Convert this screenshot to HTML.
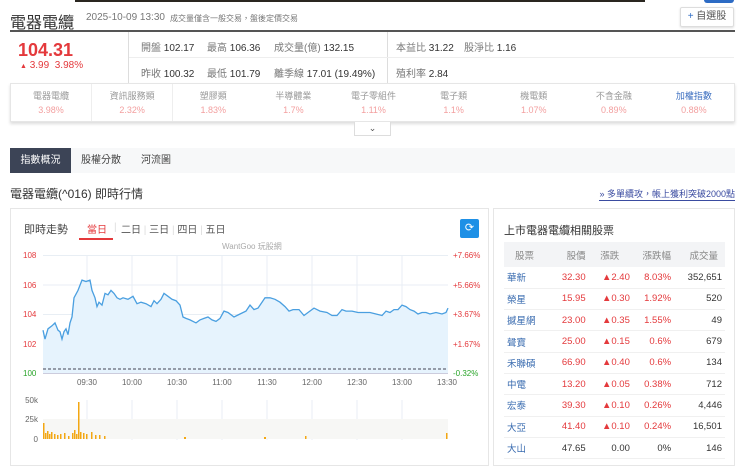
<!DOCTYPE html>
<html><head><meta charset="utf-8"><style>
*{box-sizing:border-box;margin:0;padding:0}
body{width:740px;height:469px;overflow:hidden;background:#fff;font-family:"Liberation Sans","Noto Sans CJK TC",sans-serif;color:#333;position:relative}
.a{position:absolute;white-space:nowrap}
.red{color:#e4393c}
.g{color:#777}
</style></head><body>
<div class="a" style="left:75px;top:0;width:570px;height:2px;background:#2a2620"></div>
<div class="a" style="left:10px;top:9px;font-size:16px;color:#333">電器電纜</div>
<div class="a g" style="left:86px;top:12px;font-size:10px">2025-10-09 13:30</div>
<div class="a g" style="left:170px;top:13px;font-size:8px;color:#777">成交量僅含一般交易，盤後定價交易</div>
<div class="a" style="left:680px;top:7px;width:54px;height:20px;border:1px solid #ddd;border-radius:2px;font-size:10px;line-height:18px;text-align:center;color:#555;box-shadow:0 1px 2px #ddd"><span style="color:#2d6bc4">+</span> 自選股</div>
<div class="a" style="left:704px;top:0;width:30px;height:3px;background:#2d6bc4;border-radius:0 0 3px 3px"></div>
<div class="a" style="left:10px;top:30px;width:725px;height:2px;background:#555"></div>
<div class="a" style="left:128px;top:32px;width:1px;height:51px;background:#ddd"></div>
<div class="a" style="left:387px;top:32px;width:1px;height:51px;background:#ddd"></div>
<div class="a" style="left:129px;top:57px;width:605px;height:1px;background:#eee"></div>
<div class="a red" style="left:18px;top:40px;font-size:18px;font-weight:bold">104.31</div>
<div class="a red" style="left:20px;top:60px;font-size:10px"><span style="font-size:7px">▲</span> 3.99 &nbsp;3.98%</div>
<div class="a" style="left:141px;top:39px;font-size:10px"><span class="g">開盤</span> 102.17</div>
<div class="a" style="left:207px;top:39px;font-size:10px"><span class="g">最高</span> 106.36</div>
<div class="a" style="left:274px;top:39px;font-size:10px"><span class="g">成交量(億)</span> 132.15</div>
<div class="a" style="left:141px;top:65px;font-size:10px"><span class="g">昨收</span> 100.32</div>
<div class="a" style="left:207px;top:65px;font-size:10px"><span class="g">最低</span> 101.79</div>
<div class="a" style="left:274px;top:65px;font-size:10px"><span class="g">離季線</span> 17.01 (19.49%)</div>
<div class="a" style="left:396px;top:39px;font-size:10px"><span class="g">本益比</span> 31.22</div>
<div class="a" style="left:464px;top:39px;font-size:10px"><span class="g">股淨比</span> 1.16</div>
<div class="a" style="left:396px;top:65px;font-size:10px"><span class="g">殖利率</span> 2.84</div>
<div class="a" style="left:10px;top:83px;width:725px;height:39px;border:1px solid #e6e6e6;box-shadow:0 2px 3px #ddd;display:flex">
<div style="flex:1;text-align:center;font-size:9px;color:#999;padding-top:5px;border-right:1px solid #eee">電器電纜<br><span style="color:#f3a0a0;line-height:16px">3.98%</span></div>
<div style="flex:1;text-align:center;font-size:9px;color:#999;padding-top:5px;border-right:1px solid #eee">資訊服務類<br><span style="color:#f3a0a0;line-height:16px">2.32%</span></div>
<div style="flex:1;text-align:center;font-size:9px;color:#999;padding-top:5px">塑膠類<br><span style="color:#f3a0a0;line-height:16px">1.83%</span></div>
<div style="flex:1;text-align:center;font-size:9px;color:#999;padding-top:5px">半導體業<br><span style="color:#f3a0a0;line-height:16px">1.7%</span></div>
<div style="flex:1;text-align:center;font-size:9px;color:#999;padding-top:5px">電子零組件<br><span style="color:#f3a0a0;line-height:16px">1.11%</span></div>
<div style="flex:1;text-align:center;font-size:9px;color:#999;padding-top:5px">電子類<br><span style="color:#f3a0a0;line-height:16px">1.1%</span></div>
<div style="flex:1;text-align:center;font-size:9px;color:#999;padding-top:5px">機電類<br><span style="color:#f3a0a0;line-height:16px">1.07%</span></div>
<div style="flex:1;text-align:center;font-size:9px;color:#999;padding-top:5px">不含金融<br><span style="color:#f3a0a0;line-height:16px">0.89%</span></div>
<div style="flex:1;text-align:center;font-size:9px;color:#3c6fc0;padding-top:5px">加權指數<br><span style="color:#f3a0a0;line-height:16px">0.88%</span></div>
</div>
<div class="a" style="left:354px;top:122px;width:37px;height:14px;border:1px solid #ddd;border-top:none;background:#fff;font-size:9px;text-align:center;color:#555;line-height:12px">⌄</div>
<div class="a" style="left:10px;top:148px;width:725px;height:25px;background:#f7f8f9"></div>
<div class="a" style="left:10px;top:148px;width:61px;height:25px;background:#3c4456;color:#fff;font-size:10px;line-height:25px;text-align:center">指數概況</div>
<div class="a" style="left:81px;top:148px;font-size:10px;line-height:25px;color:#444">股權分散</div>
<div class="a" style="left:141px;top:148px;font-size:10px;line-height:25px;color:#444">河流圖</div>
<div class="a" style="left:10px;top:185px;font-size:12px;color:#333">電器電纜(^016) 即時行情</div>
<div class="a" style="right:5px;top:187px;font-size:9px;color:#3a4ba0;border-bottom:1px solid #3a4ba0">» 多單續攻，帳上獲利突破2000點</div>
<div class="a" style="left:10px;top:208px;width:479px;height:258px;border:1px solid #e6e6e6"></div>
<div class="a" style="left:493px;top:208px;width:242px;height:258px;border:1px solid #e6e6e6"></div>
<div class="a" style="left:24px;top:221px;font-size:11px;color:#444">即時走勢</div>
<div class="a" style="left:87px;top:221px;font-size:10px;color:#e4393c">當日</div>
<div class="a" style="left:79px;top:238px;width:34px;height:2px;background:#e4393c"></div>
<div class="a" style="left:121px;top:221px;font-size:10px;color:#555">二日 <span style="color:#ddd">|</span> 三日 <span style="color:#ddd">|</span> 四日 <span style="color:#ddd">|</span> 五日</div>
<div class="a" style="left:114px;top:222px;font-size:10px;color:#ddd">|</div>
<div class="a" style="left:460px;top:219px;width:19px;height:19px;background:#1e90e6;border-radius:2px;color:#fff;font-size:11px;text-align:center;line-height:19px">⟳</div>
<div class="a" style="left:222px;top:241px;font-size:8px;color:#aaa">WantGoo 玩股網</div>
<svg class="a" style="left:0;top:0" width="740" height="469" viewBox="0 0 740 469">
<g stroke="#e8eef4" stroke-width="1">
<line x1="43" y1="255.5" x2="448" y2="255.5"/><line x1="43" y1="285" x2="448" y2="285"/><line x1="43" y1="314.5" x2="448" y2="314.5"/><line x1="43" y1="344" x2="448" y2="344"/>
<line x1="87" y1="255" x2="87" y2="373"/><line x1="132" y1="255" x2="132" y2="373"/><line x1="177" y1="255" x2="177" y2="373"/><line x1="222" y1="255" x2="222" y2="373"/><line x1="267" y1="255" x2="267" y2="373"/><line x1="312" y1="255" x2="312" y2="373"/><line x1="357" y1="255" x2="357" y2="373"/><line x1="402" y1="255" x2="402" y2="373"/>
<line x1="87" y1="400" x2="87" y2="440"/><line x1="132" y1="400" x2="132" y2="440"/><line x1="177" y1="400" x2="177" y2="440"/><line x1="222" y1="400" x2="222" y2="440"/><line x1="267" y1="400" x2="267" y2="440"/><line x1="312" y1="400" x2="312" y2="440"/><line x1="357" y1="400" x2="357" y2="440"/><line x1="402" y1="400" x2="402" y2="440"/>
</g>
<rect x="43" y="419" width="405" height="20" fill="#f7f7f5"/>
<line x1="43" y1="373.5" x2="448" y2="373.5" stroke="#ccd" />
<polygon fill="#e6f3fd" points="43,373 43,330.2 45,339.1 48,328.8 52,325.8 55,322.9 58,330.2 60,331.7 62,339.1 64,331.7 66,328.8 68,334.7 70,322.9 72,317 74,297.8 78,290.4 82,280.1 86,281.5 90,280.1 92,290.4 95,297.8 97,306.6 99,302.2 102,305.1 105,293.4 108,294.8 111,290.4 114,293.4 117,297.8 120,299.3 123,297.8 128,299.3 133,296.3 137,303.7 141,302.2 146,303.7 151,306.6 154,300.7 157,303.7 161,299.3 164,293.4 168,296.3 172,299.3 176,300.7 180,305.1 183,317 186,318.4 190,319.9 196,322.9 200,319.9 204,318.4 208,317 212,319.9 216,321.4 220,318.4 224,311.1 228,312.5 234,317 240,314 246,311.1 250,305.1 254,309.6 258,308.1 262,302.2 265,297.8 270,297.8 275,299.3 280,302.2 285,306.6 289,311.1 293,309.6 299,309.6 304,315.5 308,312.5 314,308.1 320,311.1 327,312.5 332,315.5 337,315.5 342,309.6 346,311.1 352,311.1 358,312.5 364,312.5 370,312.5 376,314 382,315.5 386,311.1 390,312.5 394,309.6 398,309.6 402,305.1 406,306.6 410,309.6 414,311.1 418,314 422,312.5 426,312.5 430,314 436,312.5 442,314 446,312.5 448,308.1 448,373"/>
<polyline fill="none" stroke="#4a9fe0" stroke-width="1.3" points="43,330.2 45,339.1 48,328.8 52,325.8 55,322.9 58,330.2 60,331.7 62,339.1 64,331.7 66,328.8 68,334.7 70,322.9 72,317 74,297.8 78,290.4 82,280.1 86,281.5 90,280.1 92,290.4 95,297.8 97,306.6 99,302.2 102,305.1 105,293.4 108,294.8 111,290.4 114,293.4 117,297.8 120,299.3 123,297.8 128,299.3 133,296.3 137,303.7 141,302.2 146,303.7 151,306.6 154,300.7 157,303.7 161,299.3 164,293.4 168,296.3 172,299.3 176,300.7 180,305.1 183,317 186,318.4 190,319.9 196,322.9 200,319.9 204,318.4 208,317 212,319.9 216,321.4 220,318.4 224,311.1 228,312.5 234,317 240,314 246,311.1 250,305.1 254,309.6 258,308.1 262,302.2 265,297.8 270,297.8 275,299.3 280,302.2 285,306.6 289,311.1 293,309.6 299,309.6 304,315.5 308,312.5 314,308.1 320,311.1 327,312.5 332,315.5 337,315.5 342,309.6 346,311.1 352,311.1 358,312.5 364,312.5 370,312.5 376,314 382,315.5 386,311.1 390,312.5 394,309.6 398,309.6 402,305.1 406,306.6 410,309.6 414,311.1 418,314 422,312.5 426,312.5 430,314 436,312.5 442,314 446,312.5 448,308.1"/>
<line x1="43" y1="369" x2="448" y2="369" stroke="#445" stroke-dasharray="3,2"/>
<g fill="#f3a712">
<rect x="43" y="423" width="1.5" height="16"/><rect x="45" y="433" width="1.5" height="6"/><rect x="47" y="431" width="1.5" height="8"/><rect x="49" y="434" width="1.5" height="5"/><rect x="51" y="432" width="1.5" height="7"/><rect x="54" y="434" width="1.5" height="5"/><rect x="57" y="435" width="1.5" height="4"/><rect x="60" y="434" width="1.5" height="5"/><rect x="64" y="433" width="1.5" height="6"/><rect x="68" y="436" width="1.5" height="3"/><rect x="72" y="433" width="1.5" height="6"/><rect x="74" y="430" width="1.5" height="9"/><rect x="76" y="434" width="1.5" height="5"/><rect x="78" y="402" width="1.5" height="37"/><rect x="80" y="432" width="1.5" height="7"/><rect x="83" y="433" width="1.5" height="6"/><rect x="86" y="434" width="1.5" height="5"/><rect x="91" y="432" width="1.5" height="7"/><rect x="95" y="435" width="1.5" height="4"/><rect x="99" y="435" width="1.5" height="4"/><rect x="104" y="436" width="1.5" height="3"/><rect x="184" y="437" width="2" height="2"/><rect x="264" y="437" width="2" height="2"/><rect x="305" y="436" width="1.5" height="3"/><rect x="446" y="433" width="1.5" height="6"/>
</g>
<g font-size="8" font-family="Liberation Sans,sans-serif">
<text x="23" y="258" fill="#e4393c">108</text><text x="23" y="288" fill="#e4393c">106</text><text x="23" y="317" fill="#e4393c">104</text><text x="23" y="347" fill="#e4393c">102</text><text x="23" y="376" fill="#2aa52a">100</text>
<text x="453" y="258" fill="#e4393c">+7.66%</text><text x="453" y="288" fill="#e4393c">+5.66%</text><text x="453" y="317" fill="#e4393c">+3.67%</text><text x="453" y="347" fill="#e4393c">+1.67%</text><text x="453" y="376" fill="#2aa52a">-0.32%</text>
<g fill="#666" text-anchor="middle"><text x="87" y="385">09:30</text><text x="132" y="385">10:00</text><text x="177" y="385">10:30</text><text x="222" y="385">11:00</text><text x="267" y="385">11:30</text><text x="312" y="385">12:00</text><text x="357" y="385">12:30</text><text x="402" y="385">13:00</text><text x="447" y="385">13:30</text></g>
<g fill="#666" text-anchor="end"><text x="38" y="403">50k</text><text x="38" y="422">25k</text><text x="38" y="442">0</text></g>
</g>
</svg>
<div class="a" style="left:504px;top:222px;font-size:11px;color:#333">上市電器電纜相關股票</div>
<table class="a" style="left:504px;top:242px;width:221px;border-collapse:collapse;font-size:9.5px">
<tr style="background:#f3f4f6;color:#888;height:25px"><td style="padding-left:11px">股票</td><td style="text-align:right;padding-right:4px">股價</td><td style="text-align:center">漲跌</td><td style="text-align:right">漲跌幅</td><td style="text-align:right;padding-right:7px">成交量</td></tr>
<tr style="height:21.3px;border-bottom:1px solid #f0f0f0"><td style="color:#3a6cb0;padding-left:3px">華新</td><td class="red" style="text-align:right;padding-right:4px">32.30</td><td class="red" style="text-align:right">▲2.40</td><td class="red" style="text-align:right">8.03%</td><td style="text-align:right;padding-right:3px">352,651</td></tr>
<tr style="height:21.3px;border-bottom:1px solid #f0f0f0"><td style="color:#3a6cb0;padding-left:3px">榮星</td><td class="red" style="text-align:right;padding-right:4px">15.95</td><td class="red" style="text-align:right">▲0.30</td><td class="red" style="text-align:right">1.92%</td><td style="text-align:right;padding-right:3px">520</td></tr>
<tr style="height:21.3px;border-bottom:1px solid #f0f0f0"><td style="color:#3a6cb0;padding-left:3px">撼星網</td><td class="red" style="text-align:right;padding-right:4px">23.00</td><td class="red" style="text-align:right">▲0.35</td><td class="red" style="text-align:right">1.55%</td><td style="text-align:right;padding-right:3px">49</td></tr>
<tr style="height:21.3px;border-bottom:1px solid #f0f0f0"><td style="color:#3a6cb0;padding-left:3px">聲寶</td><td class="red" style="text-align:right;padding-right:4px">25.00</td><td class="red" style="text-align:right">▲0.15</td><td class="red" style="text-align:right">0.6%</td><td style="text-align:right;padding-right:3px">679</td></tr>
<tr style="height:21.3px;border-bottom:1px solid #f0f0f0"><td style="color:#3a6cb0;padding-left:3px">禾聯碩</td><td class="red" style="text-align:right;padding-right:4px">66.90</td><td class="red" style="text-align:right">▲0.40</td><td class="red" style="text-align:right">0.6%</td><td style="text-align:right;padding-right:3px">134</td></tr>
<tr style="height:21.3px;border-bottom:1px solid #f0f0f0"><td style="color:#3a6cb0;padding-left:3px">中電</td><td class="red" style="text-align:right;padding-right:4px">13.20</td><td class="red" style="text-align:right">▲0.05</td><td class="red" style="text-align:right">0.38%</td><td style="text-align:right;padding-right:3px">712</td></tr>
<tr style="height:21.3px;border-bottom:1px solid #f0f0f0"><td style="color:#3a6cb0;padding-left:3px">宏泰</td><td class="red" style="text-align:right;padding-right:4px">39.30</td><td class="red" style="text-align:right">▲0.10</td><td class="red" style="text-align:right">0.26%</td><td style="text-align:right;padding-right:3px">4,446</td></tr>
<tr style="height:21.3px;border-bottom:1px solid #f0f0f0"><td style="color:#3a6cb0;padding-left:3px">大亞</td><td class="red" style="text-align:right;padding-right:4px">41.40</td><td class="red" style="text-align:right">▲0.10</td><td class="red" style="text-align:right">0.24%</td><td style="text-align:right;padding-right:3px">16,501</td></tr>
<tr style="height:21.3px;border-bottom:1px solid #f0f0f0"><td style="color:#3a6cb0;padding-left:3px">大山</td><td style="text-align:right;padding-right:4px">47.65</td><td style="text-align:right">0.00</td><td style="text-align:right">0%</td><td style="text-align:right;padding-right:3px">146</td></tr>
</table>
</body></html>
